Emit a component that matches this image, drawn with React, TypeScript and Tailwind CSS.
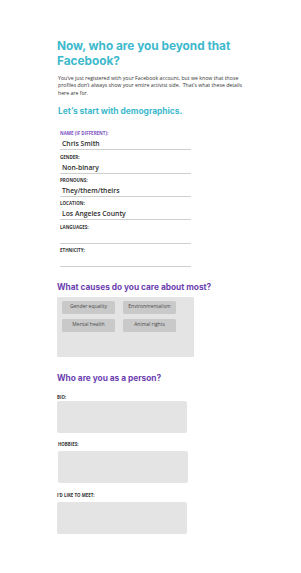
import React from 'react';

const heading = "font-['Inter',sans-serif] font-bold";
const body = "font-['Open_Sans',sans-serif]";

const demographics = [
  { label: 'Name (if different):', value: 'Chris Smith', accent: true },
  { label: 'Gender:', value: 'Non-binary' },
  { label: 'Pronouns:', value: 'They/them/theirs' },
  { label: 'Location:', value: 'Los Angeles County' },
  { label: 'Languages:', value: '' },
  { label: 'Ethnicity:', value: '' },
];

const causes = ['Gender equality', 'Environmentalism', 'Mental health', 'Animal rights'];

const Field = ({ label, value, accent }: { label: string; value: string; accent?: boolean }) => (
  <div className="h-[23.4px]">
    <div
      className={`h-[5px] leading-[5px] text-[4.5px] font-bold uppercase ${body} ${
        accent ? 'text-[#7a4fc2]' : 'text-[#333]'
      }`}
    >
      {label}
    </div>
    <div className="h-[14px] flex items-end pb-[1px] pl-[2px] border-b border-[#cfcfcf]">
      <span className={`text-[6.8px] leading-[9px] font-semibold text-[#2b2b2b] ${body}`}>{value}</span>
    </div>
  </div>
);

const TextBox = ({ label, className, gap }: { label: string; className: string; gap: string }) => (
  <div className={className}>
    <div className={`h-[4px] leading-[4px] text-[4.4px] font-bold uppercase text-[#333] ${body}`}>{label}</div>
    <div className={`${gap} w-[130px] h-[32px] bg-[#e4e4e4] rounded-[2px]`} />
  </div>
);

export default function App() {
  return (
    <div className="w-[301px] h-[573px] bg-white overflow-hidden">
      <div className="pl-[57px] pt-[39px]">
        <h1 className={`${heading} text-[11.8px] leading-[15px] text-[#3db9cd] w-[190px]`}>
          Now, who are you beyond that Facebook?
        </h1>

        <p className={`${body} mt-[6px] ml-[1px] text-[5.2px] leading-[7.4px] text-[#333] whitespace-nowrap`}>
          You’ve just registered with your Facebook account, but we know that those
          <br />
          profiles don’t always show your entire activist side.&nbsp; That’s what these details
          <br />
          here are for.
        </p>

        <h2 className={`${heading} mt-[8px] ml-[1px] text-[8.4px] leading-[12px] text-[#3db9cd]`}>
          Let’s start with demographics.
        </h2>

        <div className="mt-[14px] ml-[3px] w-[131px]">
          {demographics.map((f) => (
            <Field key={f.label} {...f} />
          ))}
        </div>

        <h2 className={`${heading} mt-[9px] text-[8.3px] leading-[12px] text-[#6c3fb0]`}>
          What causes do you care about most?
        </h2>

        <div className="mt-[4px] w-[137px] h-[60px] bg-[#e4e4e4] rounded-[1px] pl-[5px] pt-[4px]">
          <div className="grid grid-cols-[53px_53px] gap-x-[8px] gap-y-[5px]">
            {causes.map((c) => (
              <div
                key={c}
                className={`${body} h-[13px] bg-[#c9c9c9] rounded-[1.5px] flex items-center justify-center text-[5px] text-[#4a4a4a]`}
              >
                {c}
              </div>
            ))}
          </div>
        </div>

        <h2 className={`${heading} mt-[15px] text-[8.3px] leading-[12px] text-[#6c3fb0]`}>
          Who are you as a person?
        </h2>

        <TextBox label="Bio:" className="mt-[11px]" gap="mt-[2px]" />
        <TextBox label="Hobbies:" className="mt-[9px] ml-[1px]" gap="mt-[5px]" />
        <TextBox label="I'd like to meet:" className="mt-[10px]" gap="mt-[5px]" />
      </div>
    </div>
  );
}
